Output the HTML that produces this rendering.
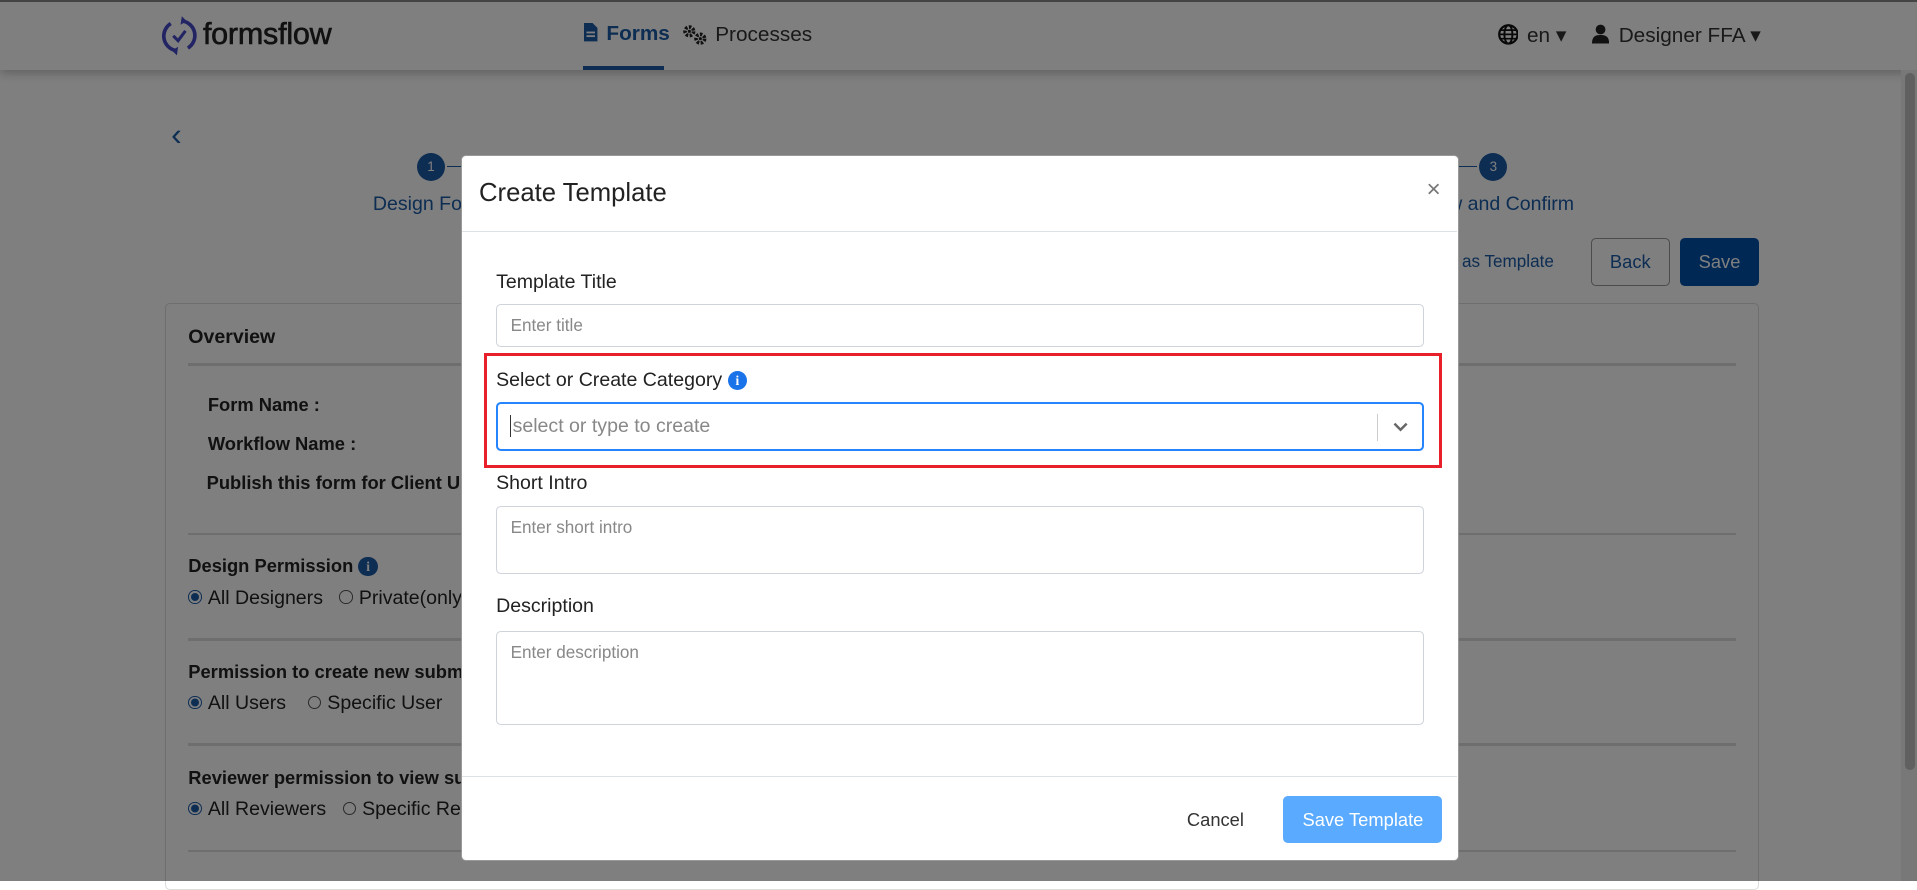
<!DOCTYPE html>
<html><head><meta charset="utf-8"><style>
html{zoom:1.22258}
*{box-sizing:border-box;margin:0;padding:0}
body{width:1568px;height:721px;overflow:hidden;position:relative;background:#fff;font-family:"Liberation Sans",sans-serif;color:#333}
.a{position:absolute;white-space:nowrap}
.nav{position:absolute;left:0;top:0;width:1568px;height:57px;background:#fff;box-shadow:0 3px 8px rgba(0,0,0,.25)}
.blue{color:#1a5ba6}
.hr{position:absolute;left:154px;width:1266px;height:2px;background:#ddd}
.b{font-weight:bold;font-size:15px;color:#222}
.lbl{font-size:16px;color:#222}
.radio{display:inline-block;width:11px;height:11px;border:1px solid #555;border-radius:50%;margin-right:5px;vertical-align:0;position:relative}
.radio.on{border:1px solid #1a5ba6;background:radial-gradient(circle,#1a5ba6 0 3px,#fff 3.5px)}
.ov{position:absolute;left:0;top:0;width:1568px;height:721px;background:rgba(0,0,0,.5)}
.modal{position:absolute;left:377px;top:127px;width:816px;height:577px;background:#fff;border-radius:4px;border:1px solid #999}
.inp{position:absolute;left:28px;width:759px;border:1px solid #ced4da;border-radius:4px;font-size:14px;color:#888;padding:9px 11px}
.info{display:inline-block;width:16px;height:16px;border-radius:50%;background:#1a73e8;color:#fff;font-size:11px;font-weight:bold;text-align:center;line-height:16px;font-family:"Liberation Serif",serif;vertical-align:1px}
</style></head><body>
<div style="position:absolute;left:0;top:0;width:1568px;height:2px;background:#444;z-index:5"></div>
<div class="nav">
<svg class="a" style="left:132px;top:12px" width="30" height="34" viewBox="0 0 30 34"><path d="M8 7 A12 12 0 0 0 12 29" fill="none" stroke="#4448c8" stroke-width="3"/><path d="M22 27 A12 12 0 0 0 18 5" fill="none" stroke="#4448c8" stroke-width="3"/><path d="M17 1 L21 5 L16 8" fill="#4448c8"/><path d="M13 33 L9 29 L14 26" fill="#4448c8"/><path d="M10 17 L14 21 L20 13" fill="none" stroke="#4448c8" stroke-width="2.5"/></svg>
<div class="a" style="left:166px;top:14px;font-size:25px;color:#222;letter-spacing:-.2px;-webkit-text-stroke:.5px #222">formsflow</div>
<svg class="a" style="left:478px;top:19px" width="11" height="15" viewBox="0 0 11 15"><path d="M0 0H7L11 4V15H0Z" fill="#1a5ba6"/><rect x="2" y="7" width="7" height="1.5" fill="#fff"/><rect x="2" y="10" width="7" height="1.5" fill="#fff"/></svg>
<div class="a blue" style="left:496px;top:18px;font-size:17px;font-weight:bold">Forms</div>
<div class="a" style="left:477px;top:54px;width:66px;height:3px;background:#1a5ba6"></div>
<svg class="a" style="left:558px;top:20px" width="21" height="18" viewBox="0 0 21 18"><circle cx="6" cy="6" r="3.5" fill="none" stroke="#222" stroke-width="3" stroke-dasharray="2 1.2"/><circle cx="6" cy="6" r="1.3" fill="#222"/><circle cx="15" cy="12" r="3.5" fill="none" stroke="#222" stroke-width="3" stroke-dasharray="2 1.2"/><circle cx="15" cy="12" r="1.3" fill="#222"/></svg>
<div class="a" style="left:585px;top:19px;font-size:17px;color:#333">Processes</div>
<svg class="a" style="left:1225px;top:20px" width="17" height="17" viewBox="0 0 17 17"><circle cx="8.5" cy="8.5" r="7.5" fill="none" stroke="#111" stroke-width="1.8"/><ellipse cx="8.5" cy="8.5" rx="3.3" ry="7.5" fill="none" stroke="#111" stroke-width="1.6"/><path d="M1 8.5H16M2 5H15M2 12H15" stroke="#111" stroke-width="1.4"/></svg>
<div class="a" style="left:1249px;top:19px;font-size:17px;color:#333">en ▾</div>
<svg class="a" style="left:1302px;top:20px" width="14" height="16" viewBox="0 0 14 16"><circle cx="7" cy="4.5" r="4" fill="#222"/><path d="M0 16C0 10 3 9 7 9S14 10 14 16Z" fill="#222"/></svg>
<div class="a" style="left:1324px;top:19px;font-size:17px;color:#333">Designer FFA ▾</div>
</div>
<div class="a blue" style="left:140px;top:95px;font-size:26px">‹</div>
<div class="a" style="left:341px;top:125px;width:23px;height:23px;border-radius:50%;background:#1a5ba6;color:#fff;font-size:11px;text-align:center;line-height:23px">1</div>
<div class="a" style="left:366px;top:136px;width:20px;height:1px;background:#1a5ba6"></div>
<div class="a blue" style="left:305px;top:158px;font-size:16px">Design Form</div>
<div class="a" style="left:1210px;top:125px;width:23px;height:23px;border-radius:50%;background:#1a5ba6;color:#fff;font-size:11px;text-align:center;line-height:23px">3</div>
<div class="a" style="left:1190px;top:136px;width:18px;height:1px;background:#1a5ba6"></div>
<div class="a blue" style="left:1172px;top:158px;font-size:16px">iew and Confirm</div>
<div class="a blue" style="left:1160px;top:206px;font-size:14px">Save as Template</div>
<div class="a" style="left:1301px;top:195px;width:65px;height:39px;border:1px solid #999;border-radius:4px;color:#1a5ba6;font-size:15px;text-align:center;line-height:37px">Back</div>
<div class="a" style="left:1374px;top:195px;width:65px;height:39px;background:#0050a8;border-radius:4px;color:#fff;font-size:15px;text-align:center;line-height:39px">Save</div>
<div class="a" style="left:135px;top:248px;width:1304px;height:480px;border:1px solid #ddd;border-radius:4px"></div>
<div class="a" style="left:154px;top:267px;font-size:16px;color:#222;font-weight:bold">Overview</div>
<div class="hr" style="top:297px"></div>
<div class="a b" style="left:170px;top:322px">Form Name :</div>
<div class="a b" style="left:170px;top:354px">Workflow Name :</div>
<div class="a b" style="left:169px;top:386px">Publish this form for Client Users</div>
<div class="hr" style="top:436px"></div>
<div class="a b" style="left:154px;top:454px">Design Permission <span class="info" style="background:#1a5ba6">i</span></div>
<div class="a lbl" style="left:154px;top:480px"><span class="radio on"></span>All Designers &nbsp;&nbsp;<span class="radio"></span>Private(only you)</div>
<div class="hr" style="top:522px"></div>
<div class="a b" style="left:154px;top:541px">Permission to create new submission</div>
<div class="a lbl" style="left:154px;top:566px"><span class="radio on"></span>All Users &nbsp;&nbsp;&nbsp;<span class="radio"></span>Specific User</div>
<div class="hr" style="top:608px"></div>
<div class="a b" style="left:154px;top:627px">Reviewer permission to view submissions</div>
<div class="a lbl" style="left:154px;top:653px"><span class="radio on"></span>All Reviewers &nbsp;&nbsp;<span class="radio"></span>Specific Reviewers</div>
<div class="hr" style="top:695px"></div>
<div class="a" style="left:1555px;top:57px;width:13px;height:664px;background:#f0f0f0"></div>
<div class="a" style="left:1558px;top:60px;width:8px;height:570px;background:#c1c1c1;border-radius:4px"></div>
<div class="ov"></div>
<div class="modal">
<div class="a" style="left:14px;top:19px;font-size:21px;color:#222">Create Template</div>
<div class="a" style="left:789px;top:16px;font-size:20px;color:#777">×</div>
<div class="a" style="left:0;top:61px;width:814px;height:1px;background:#dee2e6"></div>
<div class="a lbl" style="left:28px;top:94px">Template Title</div>
<div class="inp" style="top:121px;height:35px">Enter title</div>
<div class="a" style="left:18px;top:161px;width:784px;height:94px;border:3px solid #e8202a"></div>
<div class="a lbl" style="left:28px;top:174px">Select or Create Category <span class="info">i</span></div>
<div class="a" style="left:28px;top:201px;width:759px;height:40px;border:2px solid #2684ff;border-radius:4px;font-size:16px;color:#888;padding:9px 10px"><span style="border-left:1px solid #333;padding-left:1px">select or type to create</span>
<div class="a" style="left:719px;top:8px;width:1px;height:22px;background:#ccc"></div>
<svg class="a" style="left:731px;top:13px" width="14" height="12" viewBox="0 0 14 12"><path d="M2 3L7 8L12 3" fill="none" stroke="#666" stroke-width="2"/></svg></div>
<div class="a lbl" style="left:28px;top:258px">Short Intro</div>
<div class="inp" style="top:286px;height:56px">Enter short intro</div>
<div class="a lbl" style="left:28px;top:359px">Description</div>
<div class="inp" style="top:388px;height:77px">Enter description</div>
<div class="a" style="left:0;top:507px;width:814px;height:1px;background:#dee2e6"></div>
<div class="a" style="left:593px;top:534px;font-size:15px;color:#333">Cancel</div>
<div class="a" style="left:672px;top:523px;width:130px;height:39px;background:#5aabff;border-radius:4px;color:#fff;font-size:15px;text-align:center;line-height:39px">Save Template</div>
</div>
</body></html>
